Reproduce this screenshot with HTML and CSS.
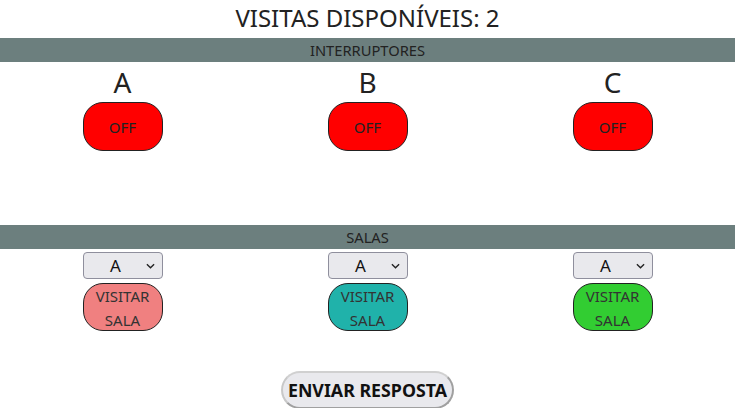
FILE: index.html
```html
<!DOCTYPE html>
<html lang="pt">
<head>
<meta charset="utf-8">
<link rel="stylesheet" href="styles.css">
</head>
<body>
<h1 class="title">VISITAS DISPONÍVEIS: 2</h1>
<div class="bar">INTERRUPTORES</div>
<div class="switches">
  <div class="col"><div class="letter">A</div><button class="sw">OFF</button></div>
  <div class="col"><div class="letter">B</div><button class="sw">OFF</button></div>
  <div class="col"><div class="letter">C</div><button class="sw">OFF</button></div>
</div>
<div class="bar">SALAS</div>
<div class="rooms">
  <div class="col">
    <div class="sel"><select><option>A</option><option>B</option><option>C</option></select><svg class="chev" viewBox="0 0 10 6" width="9" height="6"><path d="M1 1 L5 5 L9 1" fill="none" stroke="#222" stroke-width="1.5"/></svg></div>
    <button class="visit coral">VISITAR SALA</button>
  </div>
  <div class="col">
    <div class="sel"><select><option>A</option><option>B</option><option>C</option></select><svg class="chev" viewBox="0 0 10 6" width="9" height="6"><path d="M1 1 L5 5 L9 1" fill="none" stroke="#222" stroke-width="1.5"/></svg></div>
    <button class="visit sea">VISITAR SALA</button>
  </div>
  <div class="col">
    <div class="sel"><select><option>A</option><option>B</option><option>C</option></select><svg class="chev" viewBox="0 0 10 6" width="9" height="6"><path d="M1 1 L5 5 L9 1" fill="none" stroke="#222" stroke-width="1.5"/></svg></div>
    <button class="visit lime">VISITAR SALA</button>
  </div>
</div>
<div class="submit-row"><button class="submit">ENVIAR RESPOSTA</button></div>
</body>
</html>
```
FILE: styles.css
```css
html, body {
  margin: 0;
  padding: 0;
  background: #fff;
  font-family: "Noto Sans", "Open Sans", sans-serif;
  color: #222;
  overflow: hidden;
}
.title {
  margin: 0;
  height: 38px;
  line-height: 36px;
  font-size: 24px;
  font-weight: 400;
  text-align: center;
  color: #222;
}
.bar {
  height: 24px;
  line-height: 24px;
  background: #6c7f7e;
  color: #222;
  font-size: 14.7px;
  text-align: center;
}
.switches {
  display: grid;
  grid-template-columns: repeat(3, 1fr);
  height: 163px;
}
.col {
  display: flex;
  flex-direction: column;
  align-items: center;
}
.letter {
  font-size: 28px;
  line-height: 40px;
  height: 40px;
}
.sw {
  width: 80px;
  height: 49px;
  background: #ff0000;
  border: 1px solid #222;
  border-radius: 20px;
  font-family: inherit;
  font-size: 15px;
  color: #222;
  padding: 0;
}
.rooms {
  display: grid;
  grid-template-columns: repeat(3, 1fr);
  padding-top: 3px;
  height: 122px;
  box-sizing: border-box;
}
.sel {
  position: relative;
  width: 80px;
  height: 27px;
}
.sel select {
  appearance: none;
  -webkit-appearance: none;
  width: 80px;
  height: 27px;
  background: #e9e9ed;
  border: 1px solid #8f8f9d;
  border-radius: 4px;
  font-family: inherit;
  font-size: 17px;
  color: #111;
  text-align: center;
  text-align-last: center;
  padding: 0 14px 0 0;
}
.chev {
  position: absolute;
  right: 8px;
  top: 11px;
  pointer-events: none;
}
.visit {
  margin-top: 4px;
  width: 80px;
  height: 48px;
  border: 1px solid #222;
  border-radius: 20px;
  font-family: inherit;
  font-size: 15px;
  line-height: 24px;
  color: #333;
  padding: 0 2px;
}
.coral { background: #f08080; }
.sea { background: #20b2aa; }
.lime { background: #32cd32; }
.submit-row {
  display: flex;
  justify-content: center;
}
.submit {
  height: 38px;
  padding: 0 5px;
  background: #e9e9ed;
  border: 2px solid #a0a0a0;
  border-top-color: #d0d0d0;
  border-left-color: #c8c8c8;
  border-radius: 20px;
  font-family: inherit;
  font-weight: 700;
  font-size: 17.8px;
  color: #111;
}
```
